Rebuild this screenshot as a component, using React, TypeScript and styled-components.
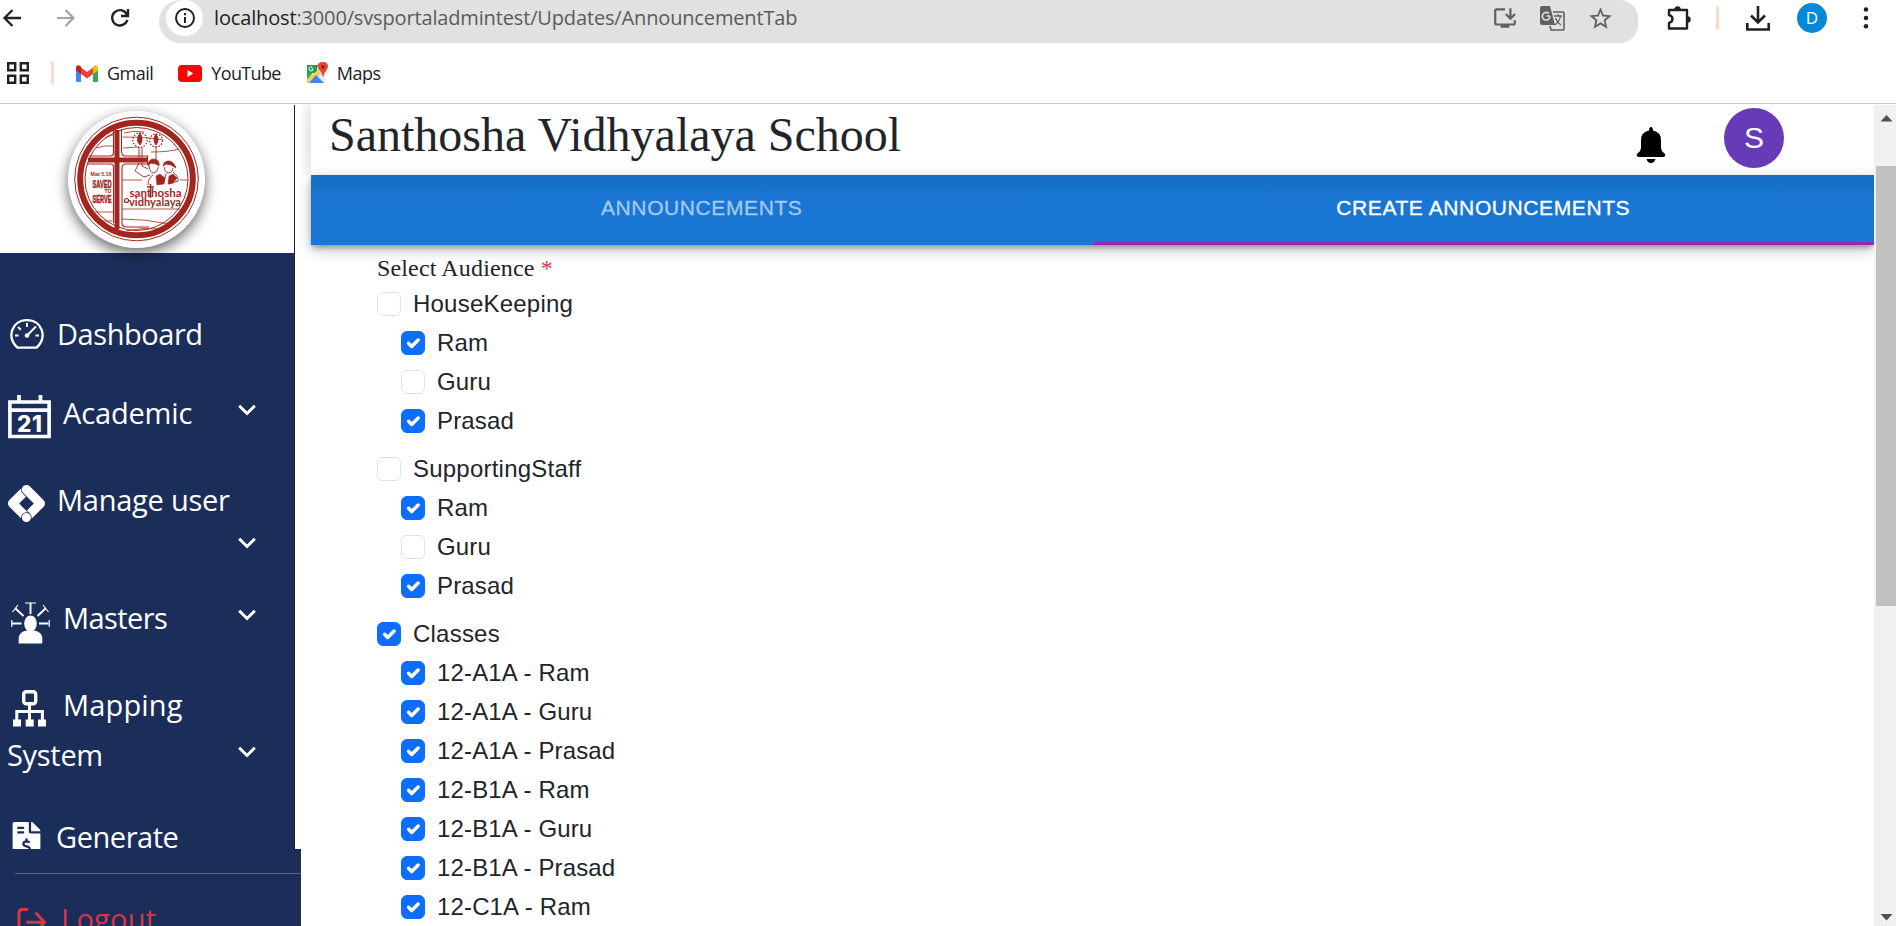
import React from "react";
import styled, { createGlobalStyle } from "styled-components";
import { SiGoogletagmanager } from "react-icons/si";
import { FaFileInvoiceDollar } from "react-icons/fa";
import { MdOutlineInstallDesktop, MdStarBorder } from "react-icons/md";

const ui = `"Open Sans", "Noto Sans", sans-serif`;
const sans = `"Liberation Sans", Arial, sans-serif`;
const serif = `"Liberation Serif", "Times New Roman", serif`;
const navy = "#1b2e5a";

const Global = createGlobalStyle`
  * { box-sizing: border-box; }
  body { margin: 0; background: #fff; overflow: hidden; }
  svg { display: block; flex: none; }
`;

const Page = styled.div`
  width: 1896px;
  height: 926px;
  overflow: hidden;
  display: flex;
  flex-direction: column;
`;

/* Browser chrome */
const Chrome = styled.header`
  height: 105px;
  flex: none;
  font-family: ${ui};
`;
const ChromeInner = styled.div`
  height: 104px;
  border-bottom: 1px solid #c9c9c9;
`;
const AddressRow = styled.div`
  height: 43px;
  display: flex;
  align-items: flex-start;
`;
const NavButtons = styled.div`
  width: 159px;
  height: 36px;
  display: flex;
  align-items: center;
`;
const NavButton = styled.span<{ $gap: number }>`
  margin-left: ${(p) => p.$gap}px;
`;
const Omnibox = styled.div`
  width: 1479px;
  height: 43px;
  background: #e1e1e1;
  border-radius: 26px 22px 22px 26px;
  display: flex;
  align-items: flex-start;
  padding-left: 7px;
`;
const SiteInfo = styled.div`
  width: 37px;
  height: 36px;
  background: #fff;
  border-radius: 50%;
  display: flex;
  align-items: center;
  justify-content: center;
`;
const Url = styled.div`
  margin-left: 11px;
  width: 1278px;
  line-height: 36px;
  font-size: 20px;
  letter-spacing: -0.15px;
  color: #5b5b5b;
  white-space: nowrap;
  b { font-weight: 400; color: #1f1f1f; }
`;
const OmniActions = styled.div`
  height: 36px;
  display: flex;
  align-items: center;
  gap: 22px;
  color: #5f6062;
`;
const ChromeActions = styled.div`
  height: 36px;
  padding-left: 28px;
  display: flex;
  align-items: center;
  color: #202124;
`;
const Divider = styled.span<{ $ml: number; $mr: number }>`
  width: 3px;
  height: 24px;
  border-radius: 2px;
  background: #fddac5;
  margin: 0 ${(p) => p.$mr}px 0 ${(p) => p.$ml}px;
`;
const Profile = styled.div`
  width: 30px;
  height: 30px;
  margin: 0 36px 0 27px;
  border-radius: 50%;
  background: #0688d6;
  color: #fff;
  font: 400 17px/30px ${ui};
  text-align: center;
`;
const Bookmarks = styled.div`
  height: 60px;
  display: flex;
  align-items: center;
  padding: 0 0 0 7px;
`;
const Bookmark = styled.span<{ $gap: number; $ls: number }>`
  display: flex;
  align-items: center;
  gap: 9px;
  margin-right: ${(p) => p.$gap}px;
  font-size: 18px;
  line-height: 24px;
  letter-spacing: ${(p) => p.$ls}px;
  color: #202124;
`;

/* App body */
const Body = styled.div`
  flex: 1;
  min-height: 0;
  display: flex;
`;
const Sidebar = styled.aside`
  width: 301px;
  flex: none;
  height: 821px;
  display: flex;
  flex-direction: column;
  font-family: ${ui};
`;
const SideTop = styled.div`
  width: 295px;
  height: 744px;
  border-right: 1px solid #222;
  overflow: hidden;
`;
const Brand = styled.div`
  height: 148px;
  padding: 6px 0 0 68px;
`;
const Logo = styled.div`
  width: 137px;
  height: 137px;
  border-radius: 50%;
  background: #fff;
  box-shadow: 0 5px 14px rgba(0, 0, 0, 0.6);
  position: relative;
`;
const Menu = styled.nav`
  height: 596px;
  padding-top: 55px;
  background: ${navy};
  color: #fff;
`;
const Item = styled.div<{ $h: number }>`
  height: ${(p) => p.$h}px;
  display: flex;
  align-items: flex-start;
  padding-right: 38px;
`;
const IconSlot = styled.span<{ $w: number; $x: number; $y: number }>`
  width: ${(p) => p.$w}px;
  flex: none;
  padding: ${(p) => p.$y}px 0 0 ${(p) => p.$x}px;
`;
const Label = styled.span<{ $ls: number }>`
  font-size: 29px;
  line-height: 52px;
  letter-spacing: ${(p) => p.$ls}px;
  white-space: pre;
`;
const ChevronSlot = styled.span<{ $y: number }>`
  margin-left: auto;
  padding-top: ${(p) => p.$y}px;
`;
const Wrapped = styled.div`
  height: 132px;
`;
const SubRow = styled(Item)`
  padding-left: 7px;
`;
const SideBottom = styled.div`
  height: 77px;
  background: ${navy};
  padding: 24px 0 0 15px;
  overflow: hidden;
`;
const Rule = styled.div`
  height: 1px;
  background: #576784;
`;
const Logout = styled.div`
  display: flex;
  align-items: flex-start;
  gap: 14px;
  padding: 19px 0 0 1px;
  color: #dc3545;
  svg { margin-top: 12px; }
`;

const Main = styled.main`
  flex: 1;
  padding-left: 10px;
  min-width: 0;
`;
const Header = styled.div`
  height: 70px;
  display: flex;
  align-items: flex-start;
  padding-left: 18px;
  box-shadow: 0 0 18px rgba(0, 0, 0, 0.2);
  clip-path: inset(0 0 0 -10px);
`;
const Title = styled.h1`
  margin: 0;
  width: 1307px;
  font: 400 48px/60px ${serif};
  color: #212529;
  white-space: nowrap;
`;
const Avatar = styled.div`
  width: 60px;
  height: 60px;
  margin: 3px 0 0 58px;
  border-radius: 50%;
  background: #673ab7;
  color: #fff;
  font: 400 30px/60px ${sans};
  text-align: center;
`;
const BellSlot = styled.span`
  padding-top: 22px;
`;
const Tabs = styled.div`
  height: 70px;
  display: flex;
  background: linear-gradient(#166cc1 0, #1976d2 22px);
  box-shadow: 0 3px 6px -1px rgba(0, 0, 0, 0.35), 0 5px 14px rgba(0, 0, 0, 0.22);
`;
const Tab = styled.div<{ $active?: boolean }>`
  flex: 1;
  height: 70px;
  text-align: center;
  font: 500 21px/65px ${sans};
  letter-spacing: 0.6px;
  color: ${(p) => (p.$active ? "#fff" : "#a3c8ed")};
  -webkit-text-stroke: 0.35px currentColor;
  border-bottom: 3px solid ${(p) => (p.$active ? "#9c27b0" : "transparent")};
`;
const Form = styled.section`
  padding: 8px 0 0 66px;
  color: #212529;
`;
const Legend = styled.div`
  font: 400 24px/31px ${serif};
  letter-spacing: 0.15px;
  height: 31.500px;
  i { font-style: normal; color: #dc3545; }
`;
const Group = styled.div`
  margin-bottom: 9px;
`;
const Check = styled.label<{ $child?: boolean }>`
  height: 39px;
  display: flex;
  align-items: center;
  gap: 12px;
  margin-left: ${(p) => (p.$child ? 24 : 0)}px;
  font: 400 24px/36px ${sans};
  letter-spacing: ${(p) => (p.$child ? 0.15 : 0.22)}px;
  white-space: nowrap;
`;
const Box = styled.span<{ $on: boolean }>`
  width: 24px;
  height: 24px;
  border-radius: 6px;
  border: 1px solid ${(p) => (p.$on ? "#0d6efd" : "#dee2e6")};
  background: ${(p) => (p.$on ? "#0d6efd" : "#fff")};
  display: flex;
  align-items: center;
  justify-content: center;
`;

const Scrollbar = styled.div`
  width: 22px;
  flex: none;
  background: #f1f1f1;
  display: flex;
  flex-direction: column;
  align-items: flex-end;
`;
const ScrollArrow = styled.div<{ $down?: boolean }>`
  width: 20px;
  height: ${(p) => (p.$down ? 20 : 61)}px;
  padding: ${(p) => (p.$down ? 8 : 10)}px 0 0 4px;
  margin-top: ${(p) => (p.$down ? "auto" : 0)};
`;
const Thumb = styled.div`
  width: 20px;
  height: 440px;
  background: #c1c1c1;
`;

const Chevron = () => (
  <svg width="18" height="12" viewBox="0 0 18 12" fill="none" stroke="#fff" strokeWidth="3">
    <path d="M1.2 1.7 9 9.5l7.800-7.800" />
  </svg>
);

const Gauge = () => (
  <svg width="34" height="31" viewBox="0 0 34 31" fill="none" stroke="#fff" strokeWidth="2.300">
    <path d="M7.500 28.700C-4 18 2 1.200 17 1.200S38 18 26.500 28.700z" strokeLinejoin="round" />
    <path d="M17 4v4M5 16.500h3.500M25.500 16.500H29M8 8l2.800 2.800M26 7.500l-8 8" strokeWidth="2" />
    <circle cx="17" cy="16.500" r="2.300" fill="#fff" stroke="none" />
  </svg>
);

const Calendar = () => (
  <svg width="43" height="44" viewBox="0 0 43 44" fill="none" stroke="#fff">
    <path d="M1.900 7h39.200v34.500H1.900z" strokeWidth="3.600" />
    <path d="M0 15.200h43" strokeWidth="3.800" />
    <path d="M11 0v7M32.500 0v7" strokeWidth="3.800" />
    <text x="21.500" y="36.700" textAnchor="middle" fill="#fff" stroke="none" fontFamily="Inter, sans-serif" fontWeight="800" fontSize="22.500" textLength="25">21</text>
  </svg>
);

const Skills = () => (
  <svg width="39" height="42" viewBox="0 0 39 42" fill="none" stroke="#fff">
    <path d="M19.500 1v11M1 21.500h9.500M28 21.500h9.500M4.500 6.500l8 7.500M34.500 6.500l-8 7.500" strokeWidth="1.900" />
    <path d="M14 1h11M.8 18v7M38.200 18v7M1.500 10l5.500-7M37.500 10 32 3" strokeWidth="1.200" />
    <ellipse cx="19.500" cy="21.500" rx="6.300" ry="8" fill="#fff" stroke="none" />
    <path d="M7.700 41.500V37q0-7.500 8-8.500h7.600q8 1 8 8.500v4.500z" fill="#fff" stroke="none" />
  </svg>
);

const Hierarchy = () => (
  <svg width="33" height="37" viewBox="0 0 33 37" fill="none" stroke="#fff">
    <rect x="10.700" y="1.700" width="12" height="12" rx="2.500" strokeWidth="3.400" />
    <path d="M16.500 14v16M3.800 30V21.500h25.600V30" strokeWidth="3" />
    <path d="M0 29.500h8v7H0zM12.700 29.500h8v7h-8zM25 29.500h8v7h-8z" fill="#fff" stroke="none" />
  </svg>
);

const Emblem = () => (
  <svg width="137" height="137" viewBox="0 0 137 137" fill="none" stroke="#a3261e">
    <circle cx="68.500" cy="68" r="61.800" strokeWidth="1" />
    <circle cx="68.500" cy="68" r="56.300" strokeWidth="6" />
    <circle cx="68.500" cy="68" r="51.500" strokeWidth="1" />
    <path d="M49 19v99M20 49h59" strokeWidth="5" />
    <path d="M45.500 18v24q0 3-3 3H21M45.500 112V56q0-3-3-3H19M53.500 18v22q0 5 4 5h22v8H58q-4 0-4 4v55q0 4 5 4h22" strokeWidth="1.100" />
    <path d="M28 37q9-3 17-2M37 27q4-2 8-3M56 22q10-3 20-1M55 37l15-1M55 26q25 0 40 3M83 41q18 0 28-3M54 69h20M112 69h8M27 101h18M54 98h58M54 108q24 0 47 5M58 120q17-4 34-2M34 110h10" strokeWidth="0.800" />
    <circle cx="72" cy="29" r="7.200" strokeWidth="1.300" strokeDasharray="1.500 1.500" />
    <circle cx="88" cy="29.500" r="6.500" strokeWidth="1.300" strokeDasharray="1.500 1.500" />
    <path d="M72 22q-5 7 0 12 4-5 0-12zM88 23q-4 6 0 11 4-5 0-11z" fill="#a3261e" />
    <path d="M71 36v16l-4 8 9 6 6-2M74 36v19l6 3M88 35v14" strokeWidth="0.900" />
    <path d="M80 55q0-7 6-7 6 1 5 7l-3-2-5-1zM95 55q1-5 6-5 5 1 7 7l-5-3-5-1z" fill="#a3261e" strokeWidth="0.800" />
    <path d="M81 55q1 7 4.500 7t5-6M96 56q1 6 4.500 6t4.500-5M85 64q-5 3-5 10M105 61q6 5 5 9l-9 3M98 63l-2 8" strokeWidth="0.900" />
    <path d="m88 65 4-2 5 4-1 6-7 1zM101 65l4-2 4 4-4 5-5 1z" fill="#a3261e" strokeWidth="0.500" />
    <g fill="#a3261e" stroke="none" textAnchor="middle">
      <text x="33" y="64.500" fontFamily="Liberation Sans" fontSize="5.600" fontWeight="700" textLength="21" lengthAdjust="spacingAndGlyphs">Mat 5.16</text>
      <text x="34" y="76.500" stroke="#a3261e" strokeWidth="0.500" fontFamily="Liberation Sans" fontSize="10.500" fontWeight="700" textLength="19" lengthAdjust="spacingAndGlyphs">SAVED</text>
      <text x="40" y="82" fontFamily="Liberation Sans" fontSize="5" fontWeight="700">TO</text>
      <text x="34" y="91.500" stroke="#a3261e" strokeWidth="0.500" fontFamily="Liberation Sans" fontSize="10.500" fontWeight="700" textLength="19" lengthAdjust="spacingAndGlyphs">SERVE</text>
      <text x="87.500" y="85.500" fontFamily="Lato" fontSize="11.500" fontWeight="700" textLength="52" lengthAdjust="spacingAndGlyphs">santhosha</text>
      <text x="87" y="95" fontFamily="Lato" fontSize="11.500" fontWeight="700" textLength="52" lengthAdjust="spacingAndGlyphs">vidhyalaya</text>
    </g>
    <path d="M82.500 73v14M79 76h7" strokeWidth="1.500" />
    <circle cx="58.500" cy="89.500" r="2" strokeWidth="1.200" />
  </svg>
);

type Entry = [string, boolean];
const groups: { name: string; on: boolean; items: Entry[] }[] = [
  { name: "HouseKeeping", on: false, items: [["Ram", true], ["Guru", false], ["Prasad", true]] },
  { name: "SupportingStaff", on: false, items: [["Ram", true], ["Guru", false], ["Prasad", true]] },
  {
    name: "Classes",
    on: true,
    items: ["12-A1A - Ram", "12-A1A - Guru", "12-A1A - Prasad", "12-B1A - Ram", "12-B1A - Guru", "12-B1A - Prasad", "12-C1A - Ram"].map(
      (t): Entry => [t, true]
    ),
  },
];

const CheckRow = ({ text, on, child }: { text: string; on: boolean; child?: boolean }) => (
  <Check $child={child}>
    <Box $on={on}>
      {on && (
        <svg width="24" height="24" viewBox="0 0 20 20" fill="none" stroke="#fff" strokeWidth="2.900" strokeLinecap="round" strokeLinejoin="round">
          <path d="m6.300 10.200 2.600 2.700 5.400-5.400" />
        </svg>
      )}
    </Box>
    {text}
  </Check>
);

export default function App() {
  return (
    <Page>
      <Global />
      <Chrome>
        <ChromeInner>
          <AddressRow>
            <NavButtons>
              <NavButton $gap={2}>
                <svg width="20" height="20" viewBox="0 0 20 20" fill="none" stroke="#202124" strokeWidth="2.300">
                  <path d="M19 10H3M10.500 2 2.500 10l8 8" />
                </svg>
              </NavButton>
              <NavButton $gap={34}>
                <svg width="20" height="20" viewBox="0 0 20 20" fill="none" stroke="#a3a3a3" strokeWidth="2.200">
                  <path d="M1 10h16M9.500 2l8 8-8 8" />
                </svg>
              </NavButton>
              <NavButton $gap={34}>
                <svg width="20" height="20" viewBox="0 0 20 20" fill="none" stroke="#202124" strokeWidth="2.400">
                  <path d="M17.300 12A7.700 7.700 0 1 1 16.500 5.800L18 8M18 1v7h-7" />
                </svg>
              </NavButton>
            </NavButtons>
            <Omnibox>
              <SiteInfo>
                <svg width="22" height="22" viewBox="0 0 22 22" fill="none" stroke="#202124" strokeWidth="2">
                  <circle cx="11" cy="11" r="9" />
                  <path d="M11 10v6M11 6v2.200" />
                </svg>
              </SiteInfo>
              <Url>
                <b>localhost</b>:3000/svsportaladmintest/Updates/AnnouncementTab
              </Url>
              <OmniActions>
                <MdOutlineInstallDesktop size={26} />
                <svg width="25" height="25" viewBox="0 0 25 25" fill="none" stroke="#5f6062" strokeWidth="1.600">
                  <path d="M13 6h10q1 0 1 1v16q0 1-1 1H11l-1-4" />
                  <path d="M2 0h8l5 19H2q-2 0-2-2V2q0-2 2-2z" fill="#5f6062" stroke="none" />
                  <path d="M10 10H6.500M9.800 10q0 4-3.500 4a3.800 3.800 0 1 1 2.500-6.500" stroke="#e1e1e1" />
                  <path d="M14 10h8M18 8v2M20.500 10q-1 6-6 9M15.500 12q2 5 5.500 7" strokeWidth="1.300" />
                </svg>
                <MdStarBorder size={27} />
              </OmniActions>
            </Omnibox>
            <ChromeActions>
              <svg width="26" height="26" viewBox="0 0 26 26" fill="none" stroke="#202124" strokeWidth="2.400" strokeLinejoin="round">
                <path d="M3 5h18v18.500H3V18q3.500-1 3.500-4T3 10z" />
                <path d="M8.500 5a3 3 0 0 1 6 0zM21 11.500a3 3 0 0 1 0 6z" fill="#202124" stroke="none" />
                <path d="M9.500 4.500a2 2 0 0 1 4 0M21.500 12.500a2 2 0 0 1 0 4" />
              </svg>
              <Divider $ml={24} $mr={27} />
              <svg width="24" height="25" viewBox="0 0 24 25" fill="none" stroke="#202124" strokeWidth="2.600">
                <path d="M12 0v16M5 9.500l7 7 7-7M1.300 17v6.500h21.400V17" />
              </svg>
              <Profile>D</Profile>
              <svg width="6" height="24" viewBox="0 0 6 24" fill="#202124">
                <circle cx="3" cy="3.500" r="2.300" />
                <circle cx="3" cy="12" r="2.300" />
                <circle cx="3" cy="20.300" r="2.300" />
              </svg>
            </ChromeActions>
          </AddressRow>
          <Bookmarks>
            <svg width="22" height="22" viewBox="0 0 22 22" fill="none" stroke="#202124" strokeWidth="2.400">
              <path d="M1.200 1.200h7v7h-7zM13.800 1.200h7v7h-7zM1.200 13.800h7v7h-7zM13.800 13.800h7v7h-7z" />
            </svg>
            <Divider $ml={22} $mr={22} />
            <Bookmark $gap={25} $ls={-0.5}>
              <svg width="22" height="17" viewBox="0 0 22 17">
                <path d="M0 2v13.500Q0 17 1.500 17H5V6z" fill="#4285f4" />
                <path d="M22 2v13.500q0 1.500-1.500 1.500H17V6z" fill="#34a853" />
                <path d="M5 2.500 11 7l6-4.500V9l-6 4.500L5 9z" fill="#ea4335" />
                <path d="M0 2.500Q1-1.500 5 1.500V9L0 5.500z" fill="#c5221f" />
                <path d="M22 2.500Q21-1.500 17 1.500V9l5-3.500z" fill="#fbbc04" />
              </svg>
              Gmail
            </Bookmark>
            <Bookmark $gap={25} $ls={-0.65}>
              <svg width="24" height="17" viewBox="0 0 24 17">
                <rect width="24" height="17" rx="4" fill="#f00" />
                <path d="M9.500 5v7l6-3.500z" fill="#fff" />
              </svg>
              YouTube
            </Bookmark>
            <Bookmark $gap={0} $ls={-0.5}>
              <svg width="22" height="22" viewBox="0 0 22 22">
                <path d="M1 3h18v18H1z" fill="#e8eaed" />
                <path d="M1 3h12L1 18z" fill="#34a853" />
                <path d="M1 3h10v8H1z" fill="#1e9e54" />
                <path d="m1 17 11-9 3 4-9 9H1z" fill="#fbd04a" />
                <path d="m10 13-7 8h15z" fill="#4285f4" />
                <path d="M17 0c-7 0-6 6-3 9 2 2 2 4 3 6 1-2 1-4 3-6 3-4 3-9-3-9z" fill="#ea4335" />
                <circle cx="17" cy="5" r="1.800" fill="#8c1d18" />
                <path d="M7 7H5.500M7 7a2 2 0 1 1-.6-1.500" stroke="#fff" fill="none" />
              </svg>
              Maps
            </Bookmark>
          </Bookmarks>
        </ChromeInner>
      </Chrome>

      <Body>
        <Sidebar>
          <SideTop>
            <Brand>
              <Logo>
                <Emblem />
              </Logo>
            </Brand>
            <Menu>
              <Item $h={79}>
                <IconSlot $w={57} $x={10} $y={11}><Gauge /></IconSlot>
                <Label $ls={-0.45}>Dashboard</Label>
              </Item>
              <Item $h={87}>
                <IconSlot $w={63} $x={8} $y={8}><Calendar /></IconSlot>
                <Label $ls={-0.15}>Academic</Label>
                <ChevronSlot $y={17}><Chevron /></ChevronSlot>
              </Item>
              <Item $h={118}>
                <IconSlot $w={57} $x={8} $y={11}><SiGoogletagmanager size={37} /></IconSlot>
                <Label $ls={-0.25}>Manage user</Label>
                <ChevronSlot $y={63}><Chevron /></ChevronSlot>
              </Item>
              <Item $h={87}>
                <IconSlot $w={63} $x={11} $y={10}><Skills /></IconSlot>
                <Label $ls={-0.6}>Masters</Label>
                <ChevronSlot $y={17}><Chevron /></ChevronSlot>
              </Item>
              <Wrapped>
                <Item $h={50}>
                  <IconSlot $w={63} $x={13} $y={11}><Hierarchy /></IconSlot>
                  <Label $ls={0.15}>Mapping</Label>
                </Item>
                <SubRow $h={50}>
                  <Label $ls={-0.3}>System</Label>
                  <ChevronSlot $y={17}><Chevron /></ChevronSlot>
                </SubRow>
              </Wrapped>
              <Item $h={50}>
                <IconSlot $w={56} $x={8} $y={11}><FaFileInvoiceDollar size={37} /></IconSlot>
                <Label $ls={-0.45}>Generate</Label>
              </Item>
            </Menu>
          </SideTop>
          <SideBottom>
            <Rule />
            <Logout>
              <svg width="31" height="31" viewBox="0 0 31 31" fill="none" stroke="#dc3545" strokeWidth="2.900" strokeLinecap="round" strokeLinejoin="round">
                <path d="M11 4.500H6.500Q3 4.500 3 8v16q0 3.500 3.500 3.500H11M11.500 17.300H28M20.500 8.500l8 8.800-8 8.800" />
              </svg>
              <Label $ls={0.25}>Logout</Label>
            </Logout>
          </SideBottom>
        </Sidebar>

        <Main>
          <Header>
            <Title>Santhosha Vidhyalaya School</Title>
            <BellSlot>
              <svg width="30" height="36" viewBox="0 0 30 36">
                <path d="M15 0q2 0 2 3.500 8 1.500 8 10V21q0 2.500 3 5 1.500 1 1.300 2.300-.2 1.700-2.300 1.700H3q-2.100 0-2.300-1.700Q.5 27 2 26q3-2.500 3-5v-7.500q0-8.500 8-10Q13 0 15 0zM10.500 32h9q-1 4-4.500 4t-4.500-4z" />
              </svg>
            </BellSlot>
            <Avatar>S</Avatar>
          </Header>
          <Tabs>
            <Tab>ANNOUNCEMENTS</Tab>
            <Tab $active>CREATE ANNOUNCEMENTS</Tab>
          </Tabs>
          <Form>
            <Legend>Select Audience <i>*</i></Legend>
            {groups.map((g) => (
              <Group key={g.name}>
                <CheckRow text={g.name} on={g.on} />
                {g.items.map(([t, on]) => (
                  <CheckRow key={t} text={t} on={on} child />
                ))}
              </Group>
            ))}
          </Form>
        </Main>

        <Scrollbar>
          <ScrollArrow>
            <svg width="13" height="7" viewBox="0 0 13 7" fill="#505050"><path d="m6.500 0 6 6.500H.5z" /></svg>
          </ScrollArrow>
          <Thumb />
          <ScrollArrow $down>
            <svg width="13" height="7" viewBox="0 0 13 7" fill="#505050"><path d="M.5 0h12l-6 6.500z" /></svg>
          </ScrollArrow>
        </Scrollbar>
      </Body>
    </Page>
  );
}
